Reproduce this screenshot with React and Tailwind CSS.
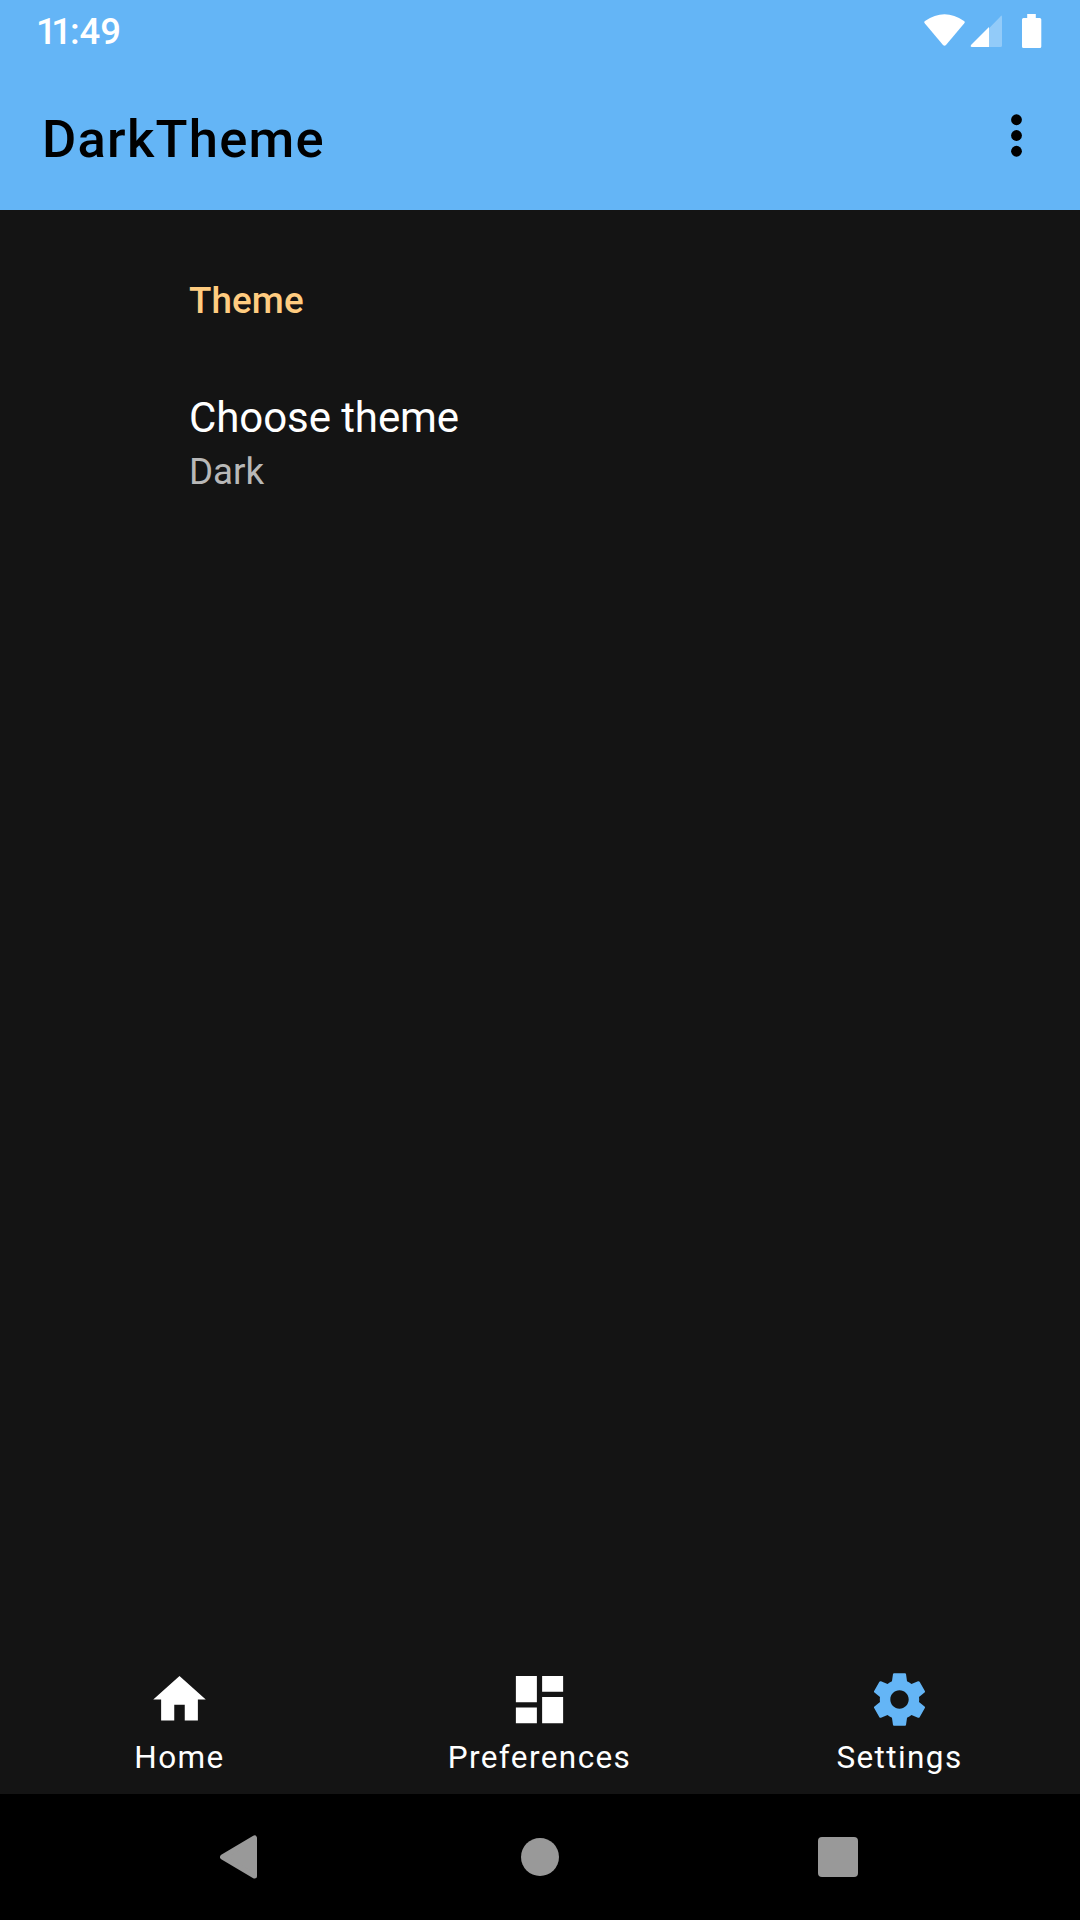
const tabs = [
  { label: "Home", d: "M10 20v-6h4v6h5v-8h3L12 3 2 12h3v8z", color: "text-white" },
  { label: "Preferences", d: "M3 13h8V3H3v10zm0 8h8v-6H3v6zm10 0h8V11h-8v10zm0-18v6h8V3h-8z", color: "text-white" },
  { label: "Settings", d: "M19.43 12.98c.04-.32.07-.64.07-.98s-.03-.66-.07-.98l2.11-1.65c.19-.15.24-.42.12-.64l-2-3.46c-.12-.22-.39-.3-.61-.22l-2.49 1c-.52-.4-1.08-.73-1.69-.98l-.38-2.65C14.46 2.18 14.25 2 14 2h-4c-.25 0-.46.18-.49.42l-.38 2.65c-.61.25-1.17.59-1.69.98l-2.49-1c-.23-.09-.49 0-.61.22l-2 3.46c-.13.22-.07.49.12.64l2.11 1.65c-.04.32-.07.65-.07.98s.03.66.07.98l-2.11 1.65c-.19.15-.24.42-.12.64l2 3.46c.12.22.39.3.61.22l2.490-1c.52.4 1.080.73 1.690.98l.38 2.650c.03.24.24.42.49.42h4c.25 0 .46-.18.49-.42l.38-2.650c.61-.25 1.170-.59 1.690-.98l2.490 1c.23.09.49 0 .61-.22l2-3.460c.12-.22.07-.49-.12-.64l-2.110-1.650zM12 15.500c-1.930 0-3.500-1.570-3.500-3.500s1.570-3.500 3.500-3.500 3.500 1.570 3.500 3.500-1.570 3.500-3.500 3.500z", color: "text-[#64b5f6]" },
];

export default function App() {
  return (
    <div className="flex h-[1920px] w-[1080px] flex-col overflow-hidden bg-[#141414] font-['Roboto',sans-serif] text-white">
      <header className="h-[210px] bg-[#64b5f6]">
        <div className="flex h-[63px] items-center justify-between pl-[36px] pr-[38px]">
          <span className="pt-[1px] text-[36.500px] font-medium">
            <span className="tracking-[-5.6px]">1</span>
            <span className="tracking-[-2px]">1</span>:49
          </span>
          <svg width="118" height="35" viewBox="0 0 118 35" fill="white">
            <path d="M1 7Q20.500-6.500 40 7Q41.300 8 40.300 9.200L22 31Q20.500 32.500 19 31L.7 9.200Q-.3 8 1 7z" />
            <path d="M65 14.200L76 3Q78-.3 78 3.500V31.500Q78 33 76.500 33H65z" opacity=".3" />
            <path d="M65 13V33H48Q45.500 32.500 47.500 30.500z" />
            <path d="M103.200 0h8.600v4h4q1.500 0 1.500 1.500v27q0 1.500-1.500 1.500H99.500q-1.500 0-1.500-1.500v-27Q98 4 99.500 4h3.700z" />
          </svg>
        </div>
        <div className="flex h-[147px] items-center justify-between pl-[42px] pr-[58px] text-black">
          <h1 className="pt-[5px] text-[52.500px] font-medium tracking-[1.250px]">DarkTheme</h1>
          <svg className="mb-[2px]" width="11" height="43" viewBox="0 0 11 43"><circle cx="5.500" cy="5.750" r="5.400" /><circle cx="5.500" cy="21.500" r="5.400" /><circle cx="5.500" cy="37.250" r="5.400" /></svg>
        </div>
      </header>
      <main className="flex-1 pl-[189px] pt-[67px]">
        <h2 className="text-[36.750px] leading-[48px] font-medium tracking-[0.1px] text-[#ffcc80]">Theme</h2>
        <p className="mt-[68px] text-[42px] leading-[50px] tracking-[-0.080px]">Choose theme</p>
        <p className="text-[36.750px] leading-[57px] text-[#b8b8b8]">Dark</p>
      </main>
      <nav className="grid h-[147px] grid-cols-3">
        {tabs.map((t) => (
          <div key={t.label} className="flex flex-col items-center pr-px pt-[21px]">
            <svg className={t.color} width="63" height="63" viewBox="0 0 24 24" fill="currentColor"><path d={t.d} /></svg>
            <span className="text-[31.500px] leading-[53px] tracking-[1.4px]">{t.label}</span>
          </div>
        ))}
      </nav>
      <footer className="flex h-[126px] items-center bg-black pl-[220px]">
        <svg width="38" height="44" viewBox="0 0 38 44" fill="#999"><path d="M34.500 3v38L2.500 22z" stroke="#999" strokeWidth="5" strokeLinejoin="round" /></svg>
        <div className="ml-[263px] size-[38px] rounded-full bg-[#999]" />
        <div className="ml-[259px] size-[40px] rounded-[4px] bg-[#999]" />
      </footer>
    </div>
  );
}
